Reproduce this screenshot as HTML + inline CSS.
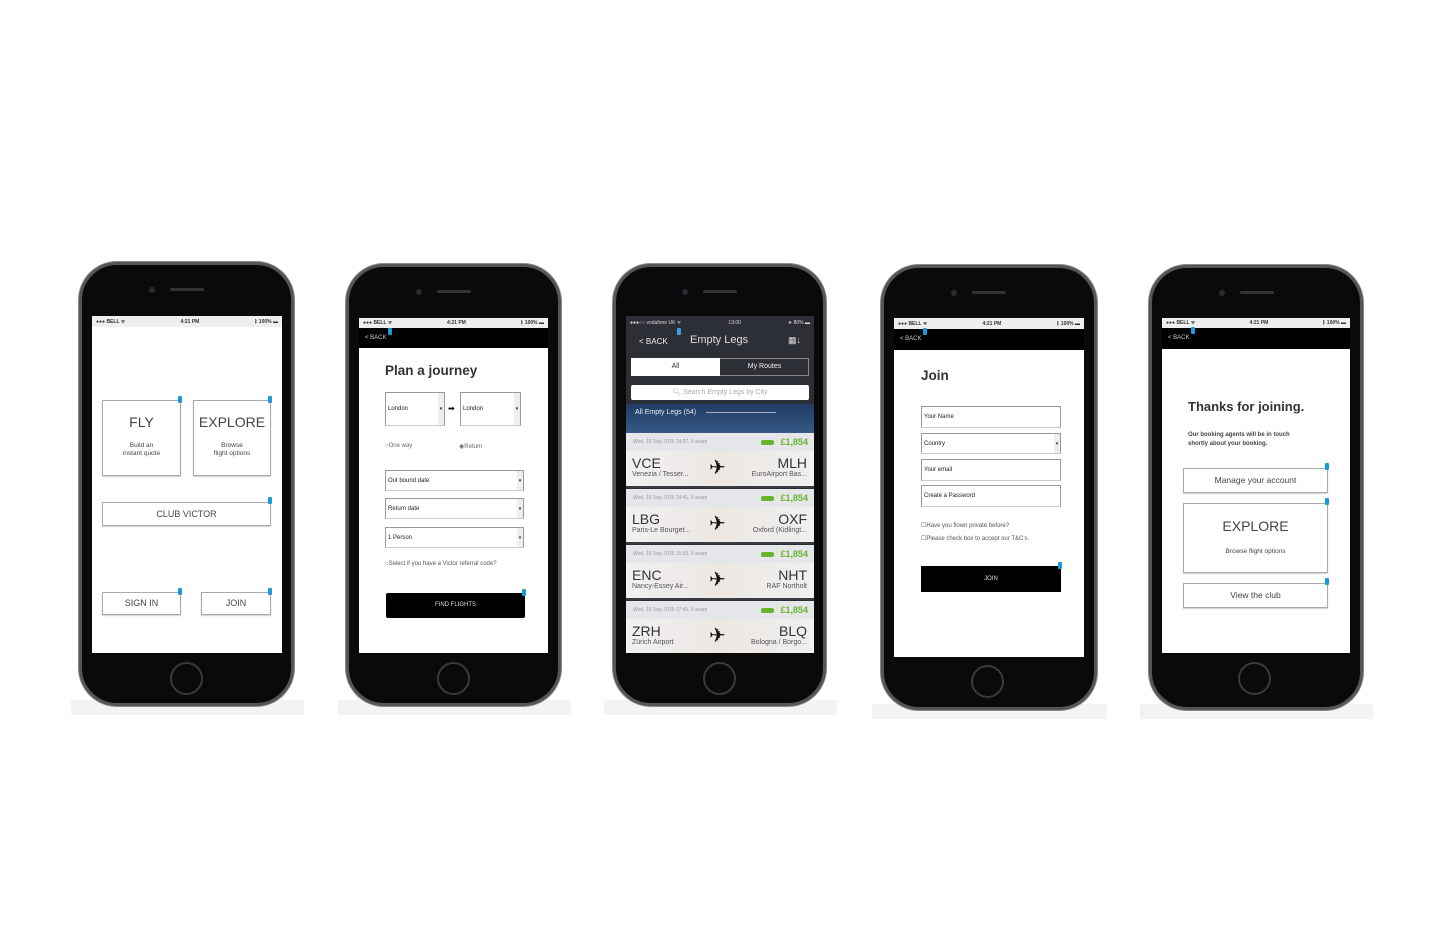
<!DOCTYPE html>
<html><head><meta charset="utf-8">
<style>
*{margin:0;padding:0;box-sizing:border-box}
body{width:1440px;height:945px;background:#fff;position:relative;overflow:hidden;font-family:"Liberation Sans",sans-serif;color:#333}
.a{position:absolute}
.phone{position:absolute;background:#0a0a0a;border:3px solid #555;border-radius:38px;box-shadow:0 0 0 1px #8a8a8a}
.spk{position:absolute;height:3px;width:34px;background:#333;border-radius:2px}
.cam{position:absolute;width:6px;height:6px;border-radius:50%;background:#2a2a35}
.home{position:absolute;width:33px;height:33px;border-radius:50%;border:2px solid #3a3a3a}
.scr{position:absolute;background:#fff;overflow:hidden}
.sb{position:absolute;left:0;right:0;top:0;height:11px;font-size:5px;font-weight:bold;display:flex;justify-content:space-between;align-items:center;padding:0 4px}
.box{position:absolute;border:1px solid #aaa;box-shadow:0 1px 1px #ccc;text-align:center;color:#444}
.flag{position:absolute;width:4px;height:7px;background:#1a9ad6;border-radius:1px}
.fld{position:absolute;border:1px solid #999;border-bottom-color:#ccc;font-size:6px;color:#222;padding-left:2px;display:flex;align-items:center}
.dd{position:absolute;right:0;top:0;bottom:0;width:6px;background:#eee;font-size:5px;display:flex;align-items:center;justify-content:center}
.row{position:absolute;left:0;right:0;height:55px;background:linear-gradient(90deg,#f1f1f1,#ece7e2 50%,#f0f0f0);border-bottom:2px solid #3a3d44}
.row .dt{position:absolute;left:0;right:0;top:0;height:18px;background:#e4e6ea;font-size:5px;color:#999;padding:6px 0 0 7px}
.row .pr{position:absolute;right:6px;top:4px;font-size:9px;color:#6ab42a;font-weight:bold}
.row .nw{position:absolute;right:40px;top:7px;width:13px;height:5px;background:#6ab42a;border-radius:2px}
.row .c1{position:absolute;left:6px;top:22px;font-size:14px;color:#333}
.row .c2{position:absolute;right:7px;top:22px;font-size:14px;color:#333;text-align:right}
.row .s1{position:absolute;left:6px;top:38px;font-size:7px;color:#555}
.row .s2{position:absolute;right:7px;top:38px;font-size:7px;color:#555}
.row .pl{position:absolute;left:83px;top:22px;font-size:20px;color:#111}
</style></head><body>

<div class="a" style="left:71px;top:700px;width:233px;height:15px;background:#f3f3f3"></div>
<div class="a" style="left:338px;top:700px;width:233px;height:15px;background:#f3f3f3"></div>
<div class="a" style="left:604px;top:700px;width:233px;height:15px;background:#f3f3f3"></div>
<div class="a" style="left:872px;top:704px;width:235px;height:15px;background:#f3f3f3"></div>
<div class="a" style="left:1140px;top:704px;width:233px;height:15px;background:#f3f3f3"></div>

<!-- PHONE 1 -->
<div class="phone" style="left:79px;top:262px;width:215px;height:444px"></div>
<div class="cam" style="left:149px;top:287px"></div>
<div class="spk" style="left:170px;top:288px"></div>
<div class="home" style="left:170px;top:662px"></div>
<div class="scr" style="left:92px;top:316px;width:190px;height:337px">
  <div class="sb" style="background:#eee;color:#333"><span>●●● BELL ᯤ</span><span>4:21 PM</span><span>ᛒ 100% ▬</span></div>
  <div class="box" style="left:10px;top:84px;width:79px;height:76px"><div style="font-size:14px;margin-top:13px">FLY</div><div style="font-size:6.5px;margin-top:12px;line-height:8px">Build an<br>instant quote</div></div>
  <div class="flag" style="left:86px;top:80px"></div>
  <div class="box" style="left:101px;top:84px;width:78px;height:76px"><div style="font-size:14px;margin-top:13px">EXPLORE</div><div style="font-size:6.5px;margin-top:12px;line-height:8px">Browse<br>flight options</div></div>
  <div class="flag" style="left:176px;top:80px"></div>
  <div class="box" style="left:10px;top:186px;width:169px;height:24px;font-size:9px;line-height:22px">CLUB VICTOR</div>
  <div class="flag" style="left:176px;top:181px"></div>
  <div class="box" style="left:10px;top:276px;width:79px;height:23px;font-size:9px;line-height:21px">SIGN IN</div>
  <div class="flag" style="left:86px;top:272px"></div>
  <div class="box" style="left:109px;top:276px;width:70px;height:23px;font-size:9px;line-height:21px">JOIN</div>
  <div class="flag" style="left:176px;top:272px"></div>
</div>

<!-- PHONE 2 -->
<div class="phone" style="left:346px;top:264px;width:215px;height:442px"></div>
<div class="cam" style="left:416px;top:289px"></div>
<div class="spk" style="left:437px;top:290px"></div>
<div class="home" style="left:437px;top:662px"></div>
<div class="scr" style="left:359px;top:318px;width:189px;height:335px">
  <div class="sb" style="background:#eee;color:#333;height:10px"><span>●●● BELL ᯤ</span><span>4:21 PM</span><span>ᛒ 100% ▬</span></div>
  <div class="a" style="left:0;right:0;top:10px;height:20px;background:#000;color:#ccc;font-size:6px;padding:7px 0 0 6px">&lt; BACK</div>
  <div class="flag" style="left:29px;top:10px"></div>
  <div class="a" style="left:26px;top:45px;font-size:13.5px;font-weight:bold;color:#333">Plan a journey</div>
  <div class="fld" style="left:26px;top:74px;width:60px;height:34px">London<div class="dd">▾</div></div>
  <div class="a" style="left:89px;top:86px;font-size:8px;color:#000">➡</div>
  <div class="fld" style="left:101px;top:74px;width:61px;height:34px">London<div class="dd">▾</div></div>
  <div class="a" style="left:26px;top:125px;font-size:6px;color:#666">○One way</div>
  <div class="a" style="left:100px;top:125px;font-size:6px;color:#666">◉Return</div>
  <div class="fld" style="left:26px;top:152px;width:139px;height:21px">Out bound date<div class="dd">▾</div></div>
  <div class="fld" style="left:26px;top:180px;width:139px;height:21px">Return date<div class="dd">▾</div></div>
  <div class="fld" style="left:26px;top:209px;width:139px;height:21px">1 Person<div class="dd">▾</div></div>
  <div class="a" style="left:26px;top:243px;font-size:6px;color:#555">○Select if you have a Victor referral code?</div>
  <div class="a" style="left:27px;top:275px;width:139px;height:25px;background:#000;color:#ddd;font-size:6px;text-align:center;line-height:25px;border-radius:2px">FIND FLIGHTS</div>
  <div class="flag" style="left:163px;top:271px"></div>
</div>

<!-- PHONE 3 -->
<div class="phone" style="left:613px;top:264px;width:213px;height:442px"></div>
<div class="cam" style="left:682px;top:289px"></div>
<div class="spk" style="left:703px;top:290px"></div>
<div class="home" style="left:703px;top:662px"></div>
<div class="scr" style="left:626px;top:316px;width:188px;height:337px;background:#2c2f36">
  <div class="sb" style="color:#ddd;height:13px;font-weight:normal"><span>●●●○○ vodafone UK ᯤ</span><span>13:00</span><span>➤ 80% ▬</span></div>
  <div class="a" style="left:13px;top:21px;font-size:8px;color:#eee">&lt; BACK</div>
  <div class="flag" style="left:51px;top:12px;background:#3aa0e0"></div>
  <div class="a" style="left:64px;top:18px;font-size:11px;color:#ddd">Empty Legs</div>
  <div class="a" style="left:162px;top:19px;font-size:9px;color:#ddd">▦↓</div>
  <div class="a" style="left:5px;top:42px;width:178px;height:18px;border:1px solid #888;background:#2c2f36"></div>
  <div class="a" style="left:5px;top:42px;width:89px;height:18px;background:#fff;color:#333;font-size:7px;text-align:center;line-height:18px">All</div>
  <div class="a" style="left:94px;top:42px;width:89px;height:18px;color:#eee;font-size:7px;text-align:center;line-height:18px">My Routes</div>
  <div class="a" style="left:5px;top:69px;width:178px;height:15px;background:#fff;border-radius:2px;color:#aaa;font-size:7px;text-align:center;line-height:15px">🔍︎ Search Empty Legs by City</div>
  <div class="a" style="left:0;top:88px;width:188px;height:29px;background:linear-gradient(180deg,#1f3c66,#375a86);color:#eee;font-size:7px;padding:5px 0 0 9px">All Empty Legs (54) <span style="display:inline-block;width:70px;height:1px;background:#aab;vertical-align:middle;margin-left:8px"></span></div>
  <div class="row" style="top:117px"><div class="dt">Wed, 16 Sep 2015 14:07, 4 seats</div><div class="nw"></div><div class="pr">£1,854</div><div class="c1">VCE</div><div class="s1">Venezia / Tesser...</div><div class="pl">✈</div><div class="c2">MLH</div><div class="s2">EuroAirport Bas...</div></div>
  <div class="row" style="top:173px"><div class="dt">Wed, 16 Sep 2015 14:41, 4 seats</div><div class="nw"></div><div class="pr">£1,854</div><div class="c1">LBG</div><div class="s1">Paris-Le Bourget...</div><div class="pl">✈</div><div class="c2">OXF</div><div class="s2">Oxford (Kidlingt...</div></div>
  <div class="row" style="top:229px"><div class="dt">Wed, 16 Sep 2015 15:55, 4 seats</div><div class="nw"></div><div class="pr">£1,854</div><div class="c1">ENC</div><div class="s1">Nancy-Essey Air...</div><div class="pl">✈</div><div class="c2">NHT</div><div class="s2">RAF Northolt</div></div>
  <div class="row" style="top:285px;border-bottom:none"><div class="dt">Wed, 16 Sep 2015 17:45, 4 seats</div><div class="nw"></div><div class="pr">£1,854</div><div class="c1">ZRH</div><div class="s1">Zürich Airport</div><div class="pl">✈</div><div class="c2">BLQ</div><div class="s2">Bologna / Borgo...</div></div>
</div>

<!-- PHONE 4 -->
<div class="phone" style="left:881px;top:265px;width:216px;height:445px"></div>
<div class="cam" style="left:951px;top:290px"></div>
<div class="spk" style="left:972px;top:291px"></div>
<div class="home" style="left:971px;top:665px"></div>
<div class="scr" style="left:894px;top:318px;width:190px;height:339px">
  <div class="sb" style="background:#eee;color:#333;height:11px"><span>●●● BELL ᯤ</span><span>4:21 PM</span><span>ᛒ 100% ▬</span></div>
  <div class="a" style="left:0;right:0;top:11px;height:21px;background:#000;color:#ccc;font-size:6px;padding:7px 0 0 6px">&lt; BACK</div>
  <div class="flag" style="left:29px;top:10px"></div>
  <div class="a" style="left:27px;top:50px;font-size:13.5px;font-weight:bold;color:#333">Join</div>
  <div class="fld" style="left:27px;top:88px;width:140px;height:22px">Your Name</div>
  <div class="fld" style="left:27px;top:115px;width:140px;height:21px">Country<div class="dd">▾</div></div>
  <div class="fld" style="left:27px;top:141px;width:140px;height:22px">Your email</div>
  <div class="fld" style="left:27px;top:167px;width:140px;height:22px">Create a Password</div>
  <div class="a" style="left:27px;top:204px;font-size:6px;color:#555">☐Have you flown private before?</div>
  <div class="a" style="left:27px;top:217px;font-size:6px;color:#555">☐Please check box to accept our T&amp;C's.</div>
  <div class="a" style="left:27px;top:248px;width:140px;height:26px;background:#000;color:#ddd;font-size:6px;text-align:center;line-height:26px">JOIN</div>
  <div class="flag" style="left:164px;top:244px"></div>
</div>

<!-- PHONE 5 -->
<div class="phone" style="left:1149px;top:265px;width:214px;height:445px"></div>
<div class="cam" style="left:1219px;top:290px"></div>
<div class="spk" style="left:1240px;top:291px"></div>
<div class="home" style="left:1238px;top:662px"></div>
<div class="scr" style="left:1162px;top:318px;width:188px;height:335px">
  <div class="sb" style="background:#eee;color:#333;height:10px"><span>●●● BELL ᯤ</span><span>4:21 PM</span><span>ᛒ 100% ▬</span></div>
  <div class="a" style="left:0;right:0;top:10px;height:21px;background:#000;color:#ccc;font-size:6px;padding:7px 0 0 6px">&lt; BACK</div>
  <div class="flag" style="left:29px;top:9px"></div>
  <div class="a" style="left:26px;top:81px;font-size:13px;font-weight:bold;color:#333">Thanks for joining.</div>
  <div class="a" style="left:26px;top:113px;font-size:6px;font-weight:bold;color:#444;line-height:8.5px">Our booking agents will be in touch<br>shortly about your booking.</div>
  <div class="box" style="left:21px;top:150px;width:145px;height:25px;font-size:8.5px;line-height:23px">Manage your account</div>
  <div class="flag" style="left:163px;top:145px"></div>
  <div class="box" style="left:21px;top:185px;width:145px;height:70px"><div style="font-size:14px;margin-top:14px">EXPLORE</div><div style="font-size:6.5px;margin-top:14px">Browse flight options</div></div>
  <div class="flag" style="left:163px;top:180px"></div>
  <div class="box" style="left:21px;top:265px;width:145px;height:25px;font-size:8.5px;line-height:23px">View the club</div>
  <div class="flag" style="left:163px;top:260px"></div>
</div>

</body></html>
